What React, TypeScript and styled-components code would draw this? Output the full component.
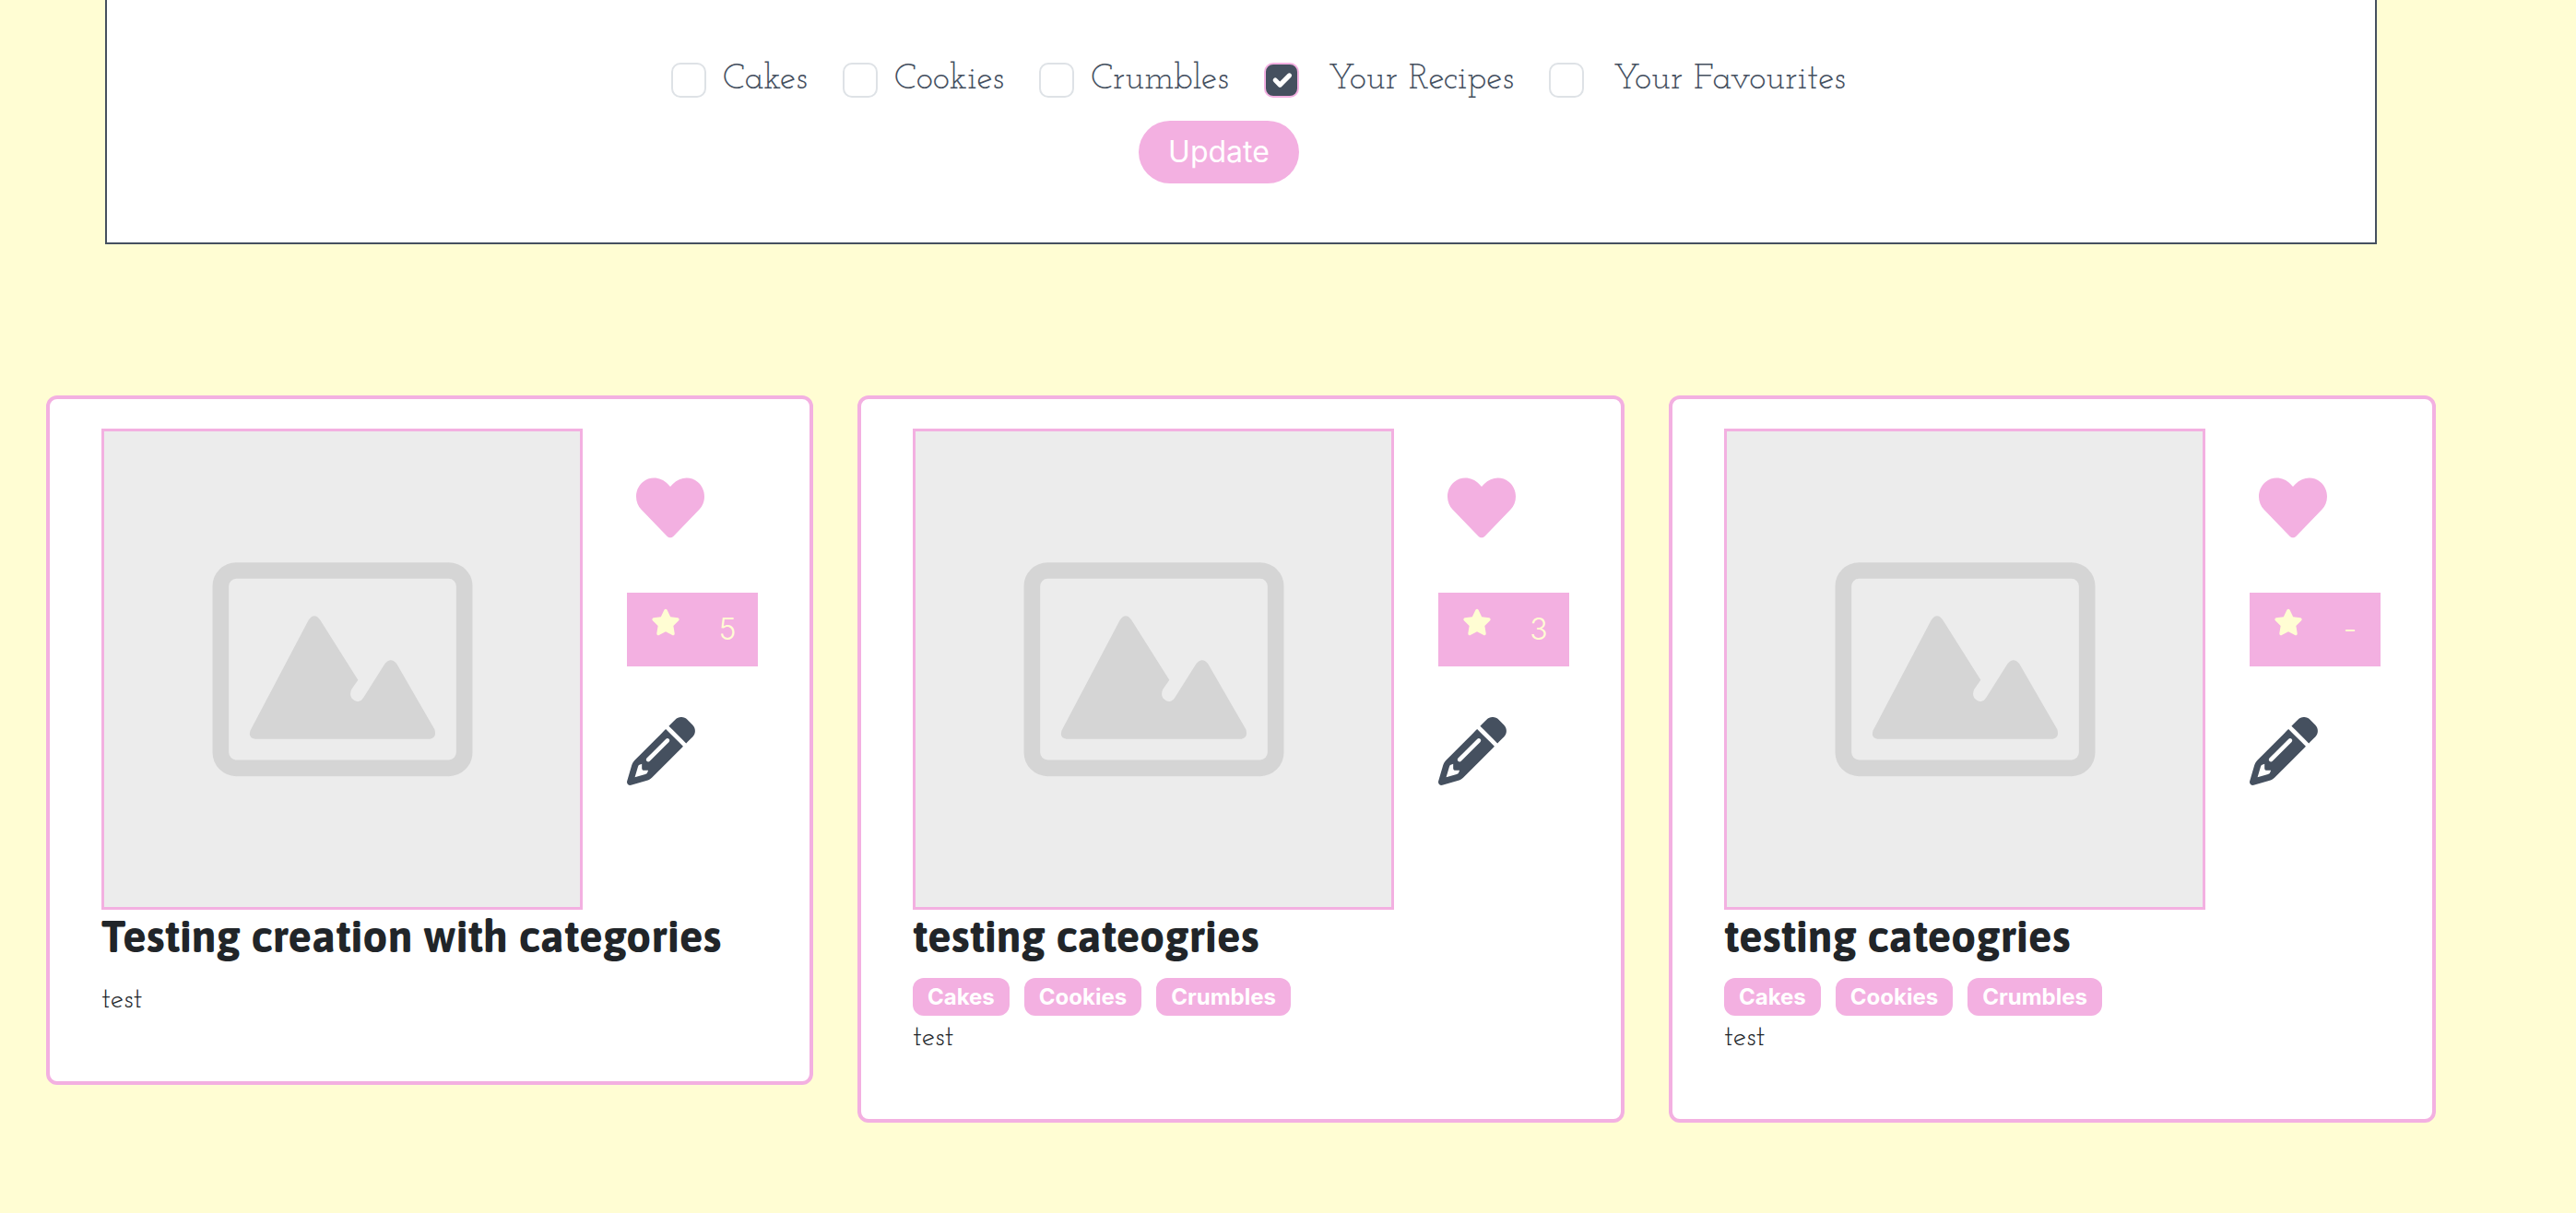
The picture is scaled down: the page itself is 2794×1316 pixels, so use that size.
import React, { useState } from "react";
import styled, { createGlobalStyle } from "styled-components";
import { FaHeart } from "react-icons/fa";
import { FaPencil, FaStar } from "react-icons/fa6";

const pink = "#f3b0e1";
const cream = "#fffdd3";
const slate = "#45505f";
const ink = "#212529";
const slab = `"Josefin Slab", Lato, sans-serif`;
const ui = `Inter, "Liberation Sans", sans-serif`;

const GlobalStyle = createGlobalStyle`
  *, *::before, *::after { box-sizing: border-box; }
  body {
    margin: 0;
    background: ${cream};
    color: ${ink};
    font-family: ${ui};
    font-size: 32px;
    line-height: 48px;
  }
`;

const FilterPanel = styled.form`
  display: flex;
  flex-direction: column;
  gap: 20px;
  margin: 0 216px 164px 114px;
  padding: 62px 0 64px;
  background: #fff;
  border: 2px solid ${slate};
  border-top: 0;
`;

const Options = styled.fieldset`
  display: flex;
  justify-content: center;
  gap: 38px;
  margin: 0;
  padding: 0 0 0 38px;
  border: 0;
`;

const Option = styled.label<{ $gap: number }>`
  display: flex;
  align-items: center;
  gap: ${(p) => p.$gap}px;
  color: ${slate};
  font-family: ${slab};
  font-size: 39px;
  font-weight: 400;
  line-height: 49px;
`;

const Tick = styled.input`
  appearance: none;
  flex: none;
  width: 38px;
  height: 38px;
  margin: 0;
  border: 2px solid #dee2e6;
  border-radius: 10px;
  background: #fff center / contain no-repeat;

  &:checked {
    border-color: ${pink};
    background-color: ${slate};
    background-image: url("data:image/svg+xml,%3Csvg xmlns='http://www.w3.org/2000/svg' viewBox='0 0 20 20'%3E%3Cpath fill='none' stroke='%23fff' stroke-linecap='round' stroke-linejoin='round' stroke-width='3' d='m6 10 3 3 6-6'/%3E%3C/svg%3E");
  }
`;

const Actions = styled.div`
  display: flex;
  justify-content: center;
  padding-right: 48px;
`;

const UpdateButton = styled.button`
  height: 68px;
  padding: 0 32px;
  border: 0;
  border-radius: 34px;
  background: ${pink};
  color: #fff;
  font-family: ${ui};
  font-size: 32px;
  line-height: 48px;
`;

const CardGrid = styled.main`
  display: grid;
  grid-template-columns: repeat(3, 1fr);
  align-items: start;
  gap: 48px;
  padding: 0 152px 96px 50px;
`;

const Card = styled.article`
  padding: 32px 56px;
  background: #fff;
  border: 4px solid ${pink};
  border-radius: 12px;
`;

const CardTop = styled.div`
  display: flex;
  gap: 48px;
`;

const Picture = styled.svg`
  display: block;
  flex: none;
  width: 522px;
  height: 522px;
  background: #ececec;
  border: 3px solid ${pink};
`;

const Side = styled.div`
  display: flex;
  flex-direction: column;
  align-items: flex-start;
  gap: 55px;
  padding-top: 49px;
`;

const HeartButton = styled.button`
  display: flex;
  padding: 0 0 0 10px;
  border: 0;
  background: none;
  color: ${pink};
  font-size: 74px;
`;

const EditLink = styled.a`
  display: flex;
  color: ${slate};
  font-size: 74px;
`;

const Rating = styled.div`
  display: flex;
  justify-content: space-between;
  width: 142px;
  padding: 16px 12px 16px 26px;
  background: ${pink};
  color: ${cream};
`;

const Score = styled.span`
  width: 42px;
  font-weight: 300;
  text-align: center;
`;

const Title = styled.h2`
  margin: 0 0 16px;
  font-family: Asap, "Open Sans", sans-serif;
  font-size: 48px;
  font-weight: 700;
  line-height: 58px;
`;

const Badges = styled.div`
  display: flex;
  gap: 16px;
`;

const Badge = styled.span`
  padding: 0 16px;
  border-radius: 12px;
  background: ${pink};
  color: #fff;
  font-size: 24px;
  font-weight: 700;
  line-height: 41px;
`;

const Description = styled.p`
  margin: 0 0 32px;
  font-family: ${slab};
  font-size: 32px;
  font-weight: 400;
`;

function Placeholder() {
  return (
    <Picture viewBox="-291 -366 1548 1548" role="img" aria-label="No photo">
      <rect x="88" y="87" width="793" height="643" rx="51" fill="none" stroke="#d5d5d5" strokeWidth="53" />
      <path
        fill="#d5d5d5"
        d="M185 607 L374 248 Q393 222 412 248 L535 443 L515 472 Q506 488 514 502 Q524 514 536 513 Q548 510 553 500 L622 391 Q642 367 661 391 L784 604 Q792 630 770 635 L200 635 Q176 632 185 607Z"
      />
    </Picture>
  );
}

type Recipe = { id: number; title: string; score: string; tags: string[]; text: string };

const recipes: Recipe[] = [
  { id: 1, title: "Testing creation with categories", score: "5", tags: [], text: "test" },
  { id: 2, title: "testing cateogries", score: "3", tags: ["Cakes", "Cookies", "Crumbles"], text: "test" },
  { id: 3, title: "testing cateogries", score: "-", tags: ["Cakes", "Cookies", "Crumbles"], text: "test" },
];

const options = [
  { name: "Cakes", gap: 18 },
  { name: "Cookies", gap: 18 },
  { name: "Crumbles", gap: 18 },
  { name: "Your Recipes", gap: 32 },
  { name: "Your Favourites", gap: 32 },
];

function RecipeCard({ recipe }: { recipe: Recipe }) {
  return (
    <Card>
      <CardTop>
        <Placeholder />
        <Side>
          <HeartButton type="button" aria-label="Favourite">
            <FaHeart />
          </HeartButton>
          <Rating>
            <FaStar />
            <Score>{recipe.score}</Score>
          </Rating>
          <EditLink href="#edit" aria-label="Edit recipe">
            <FaPencil />
          </EditLink>
        </Side>
      </CardTop>
      <Title>{recipe.title}</Title>
      {recipe.tags.length > 0 && (
        <Badges>
          {recipe.tags.map((tag) => (
            <Badge key={tag}>{tag}</Badge>
          ))}
        </Badges>
      )}
      <Description>{recipe.text}</Description>
    </Card>
  );
}

export default function App() {
  const [selected, setSelected] = useState<string[]>(["Your Recipes"]);
  const toggle = (name: string) =>
    setSelected((now) => (now.includes(name) ? now.filter((n) => n !== name) : [...now, name]));

  return (
    <>
      <GlobalStyle />
      <FilterPanel onSubmit={(e) => e.preventDefault()}>
        <Options>
          {options.map(({ name, gap }) => (
            <Option key={name} $gap={gap}>
              <Tick type="checkbox" checked={selected.includes(name)} onChange={() => toggle(name)} />
              {name}
            </Option>
          ))}
        </Options>
        <Actions>
          <UpdateButton type="submit">Update</UpdateButton>
        </Actions>
      </FilterPanel>
      <CardGrid>
        {recipes.map((recipe) => (
          <RecipeCard key={recipe.id} recipe={recipe} />
        ))}
      </CardGrid>
    </>
  );
}
